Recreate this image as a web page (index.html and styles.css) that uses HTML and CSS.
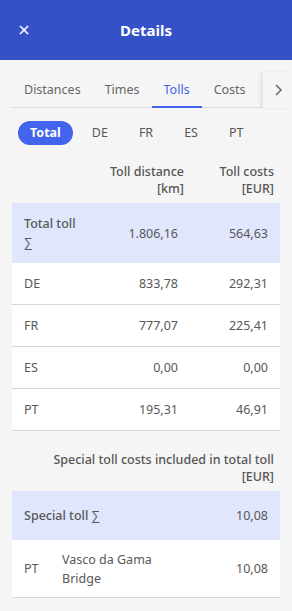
FILE: index.html
```html
<!DOCTYPE html>
<html lang="en">
<head>
  <meta charset="UTF-8" />
  <meta name="viewport" content="width=device-width, initial-scale=1.0"/>
  <title>Details</title>
  <link rel="stylesheet" href="styles.css">
</head>
<body>

  <header class="topbar">
    <button class="close">&times;</button>
    <h1>Details</h1>
  </header>

  <div class="tabs-wrap">
    <nav class="tabs">
      <span class="tab">Distances</span>
      <span class="tab">Times</span>
      <span class="tab active">Tolls</span>
      <span class="tab">Costs</span>
    </nav>
    <div class="tabs-more">
      <svg width="10" height="14" viewBox="0 0 10 14"><path d="M3 2 L8 7 L3 12" fill="none" stroke="#666" stroke-width="1.5"/></svg>
    </div>
  </div>

  <div class="pills">
    <span class="pill active">Total</span>
    <span class="pill">DE</span>
    <span class="pill">FR</span>
    <span class="pill">ES</span>
    <span class="pill">PT</span>
  </div>

  <table class="toll-table">
    <colgroup>
      <col class="col-label">
      <col class="col-dist">
      <col class="col-cost">
    </colgroup>
    <thead>
      <tr>
        <th></th>
        <th class="num">Toll distance<br>[km]</th>
        <th class="num">Toll costs<br>[EUR]</th>
      </tr>
    </thead>
    <tbody>
      <tr class="sum">
        <td class="label">Total toll<br>&sum;</td>
        <td class="num">1.806,16</td>
        <td class="num">564,63</td>
      </tr>
      <tr><td class="label">DE</td><td class="num">833,78</td><td class="num">292,31</td></tr>
      <tr><td class="label">FR</td><td class="num">777,07</td><td class="num">225,41</td></tr>
      <tr><td class="label">ES</td><td class="num">0,00</td><td class="num">0,00</td></tr>
      <tr><td class="label">PT</td><td class="num">195,31</td><td class="num">46,91</td></tr>
    </tbody>
  </table>

  <table class="toll-table special">
    <colgroup>
      <col class="col-country">
      <col>
      <col class="col-cost">
    </colgroup>
    <thead>
      <tr>
        <th colspan="3" class="num">Special toll costs included in total toll<br>[EUR]</th>
      </tr>
    </thead>
    <tbody>
      <tr class="sum">
        <td class="label" colspan="2">Special toll &sum;</td>
        <td class="num">10,08</td>
      </tr>
      <tr class="tall">
        <td class="label">PT</td>
        <td class="label">Vasco da Gama<br>Bridge</td>
        <td class="num">10,08</td>
      </tr>
    </tbody>
  </table>

</body>
</html>
```

FILE: styles.css
```css
body {
  margin: 0;
  font-family: 'Noto Sans', 'Open Sans', sans-serif;
  font-size: 12.5px;
  color: #585858;
  background: #f5f5f5;
}

.topbar {
  height: 60px;
  background: #3451c6;
  display: flex;
  align-items: center;
  justify-content: center;
  position: relative;
}

.topbar h1 {
  margin: 0;
  font-size: 15px;
  font-weight: 700;
  color: #fff;
}

.close {
  position: absolute;
  left: 17px;
  top: 19px;
  width: 14px;
  height: 22px;
  padding: 0;
  border: none;
  background: none;
  color: #fff;
  font-size: 16px;
  line-height: 22px;
  font-family: 'DejaVu Sans', sans-serif;
}

.tabs-wrap {
  display: flex;
  padding: 12px 0 0 12px;
  height: 36px;
}

.tabs {
  flex: 1;
  display: flex;
  border-bottom: 1px solid #dcdcdc;
}

.tab {
  padding: 0 12px;
  display: flex;
  align-items: center;
  color: #666;
  border-bottom: 2px solid transparent;
  margin-bottom: -1px;
}

.tab.active {
  color: #4263eb;
  border-bottom-color: #4263eb;
}

.tabs-more {
  width: 29px;
  display: flex;
  align-items: center;
  justify-content: center;
  box-shadow: -2px 0 3px rgba(0,0,0,0.07);
  border-left: 1px solid #e8e8e8;
}

.pills {
  display: flex;
  gap: 7px;
  padding: 13px 18px 0;
}

.pill {
  height: 24px;
  line-height: 24px;
  padding: 0 12px;
  border-radius: 12px;
  color: #585858;
}

.pill.active {
  background: #4263eb;
  color: #fff;
  font-weight: 700;
}

.toll-table {
  width: 268px;
  margin: 0 12px;
  border-collapse: collapse;
  table-layout: fixed;
}

.col-label {
  width: 88px;
}

.col-dist {
  width: 90px;
}

.col-cost {
  width: 90px;
}

.col-country {
  width: 38px;
}

.toll-table th {
  font-weight: 500;
  color: #555;
  line-height: 17px;
  padding: 18px 6px 6px;
  vertical-align: bottom;
  white-space: nowrap;
}

.special th {
  padding-top: 20px;
}

.toll-table th.num {
  text-align: right;
}

.toll-table td {
  height: 41px;
  padding: 0 12px;
  background: #fff;
  border-bottom: 1px solid #d6d6d6;
  line-height: 19px;
}

.toll-table td.num {
  text-align: right;
}

.toll-table tr.sum td {
  background: #e0e6fc;
  border-bottom: none;
  height: 60px;
}

.toll-table tr.sum td.label {
  font-weight: 500;
}

.special tr.sum td {
  height: 49px;
}

.special tr.tall td {
  height: 57px;
}
```
